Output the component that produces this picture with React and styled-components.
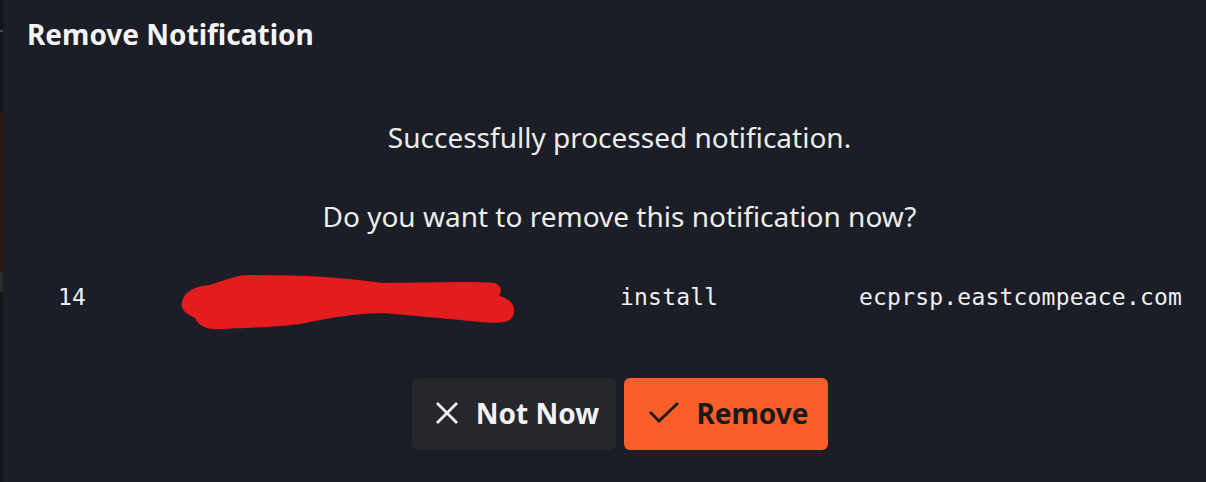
import React from 'react';
import styled, { createGlobalStyle } from 'styled-components';

const GlobalStyle = createGlobalStyle`
  html, body {
    margin: 0;
    padding: 0;
    background: #121418;
    overflow: hidden;
  }
`;

const Page = styled.div`
  display: flex;
  width: 1206px;
  height: 482px;
  overflow: hidden;
`;

// sliver of the page behind the dialog
const Backdrop = styled.div`
  flex: 0 0 3px;
  display: flex;
  flex-direction: column;
  background: #141518;
`;

const BackdropBit = styled.div`
  height: ${(p) => p.h}px;
  background: ${(p) => p.c};
`;

// dialog runs past the right edge of the window
const Dialog = styled.div`
  flex: 0 0 1233px;
  display: flex;
  flex-direction: column;
  background: #1b1e26;
  font-family: 'Noto Sans', 'Open Sans', sans-serif;
  color: #ececec;
`;

const Title = styled.h2`
  margin: 0;
  padding: 15px 0 0 24px;
  font-size: 28px;
  font-weight: 700;
  line-height: 38px;
  color: #f4f4f4;
`;

const Body = styled.div`
  display: flex;
  flex-direction: column;
  align-items: center;
  padding-top: 65px;
`;

const Message = styled.p`
  margin: 0 0 ${(p) => p.gap}px;
  font-size: 28px;
  line-height: 38px;
  color: #ececec;
`;

const Row = styled.div`
  align-self: stretch;
  display: grid;
  grid-template-columns: 122px 440px 239px auto;
  align-items: center;
  height: 60px;
  margin-top: 32px;
  padding-left: 55px;
  font-family: 'DejaVu Sans Mono', 'Liberation Mono', monospace;
  font-size: 23px;
  letter-spacing: 0.2px;
  color: #f0f0f0;
`;

const Cell = styled.span`
  white-space: nowrap;
`;

const Scribble = styled.svg`
  display: block;
  width: 340px;
  height: 66px;
  margin: -3px 0;
`;

const Actions = styled.div`
  display: flex;
  gap: 8px;
  margin-top: 51px;
`;

const Button = styled.button`
  display: flex;
  align-items: center;
  justify-content: center;
  gap: 17px;
  width: 204px;
  height: 72px;
  border: none;
  border-radius: 6px;
  font-family: 'Noto Sans', 'Open Sans', sans-serif;
  font-size: 28px;
  font-weight: 700;
  background: ${(p) => (p.primary ? '#f95d2a' : '#26272d')};
  color: ${(p) => (p.primary ? '#1a1a1a' : '#f2f2f2')};
  padding: 0 0 2px 7px;
`;

const XIcon = () => (
  <svg width="24" height="24" viewBox="0 0 24 24" fill="none" stroke="currentColor" strokeWidth="2.8" strokeLinecap="square">
    <path d="M3 3 L21 21 M21 3 L3 21" />
  </svg>
);

const CheckIcon = () => (
  <svg width="30" height="24" viewBox="0 0 30 24" fill="none" stroke="currentColor" strokeWidth="2.8" strokeLinecap="square">
    <path d="M2 12 L10 20 L28 3" />
  </svg>
);

const App = () => {
  return (
    <Page>
      <GlobalStyle />
      <Backdrop>
        <BackdropBit h={30} c="#141518" />
        <BackdropBit h={2} c="#4a4a4a" />
        <BackdropBit h={80} c="#141518" />
        <BackdropBit h={160} c="#2a1a14" />
        <BackdropBit h={20} c="#2b2b2b" />
        <BackdropBit h={190} c="#141518" />
      </Backdrop>
      <Dialog>
        <Title>Remove Notification</Title>
        <Body>
          <Message gap={41}>Successfully processed notification.</Message>
          <Message gap={0}>Do you want to remove this notification now?</Message>
          <Row>
            <Cell>14</Cell>
            <Cell>
              <Scribble viewBox="0 0 340 66">
                <path
                  fill="#e31c1e"
                  d="M2 38 C4 28 14 22 30 21 C50 14 60 11 69 11 C120 11 160 13 203 19 C250 19 290 17 314 19 C322 21 322 28 319 32 C330 34 337 42 333 52 C330 58 322 60 300 58 C280 56 260 54 203 49 C170 50 150 54 120 60 C100 63 60 64 40 65 C28 66 18 62 15 54 C6 50 0 45 2 38 Z"
                />
              </Scribble>
            </Cell>
            <Cell>install</Cell>
            <Cell>ecprsp.eastcompeace.com</Cell>
          </Row>
          <Actions>
            <Button>
              <XIcon />
              Not Now
            </Button>
            <Button primary>
              <CheckIcon />
              Remove
            </Button>
          </Actions>
        </Body>
      </Dialog>
    </Page>
  );
};

export default App;
